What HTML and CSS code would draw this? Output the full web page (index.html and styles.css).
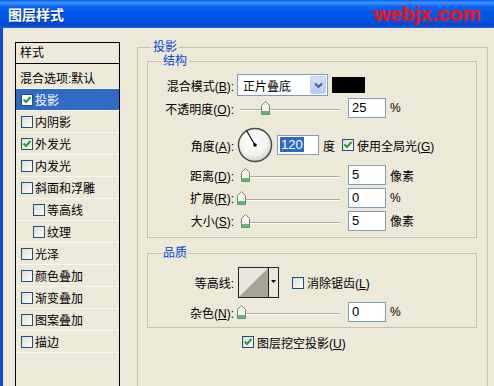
FILE: index.html
```html
<!DOCTYPE html>
<html lang="zh-CN">
<head>
  <meta charset="UTF-8">
  <title>图层样式</title>
  <link rel="stylesheet" href="styles.css">
</head>
<body>

<div class="titlebar">
  <span class="title">图层样式</span>
  <span class="brand">webjx.com</span>
</div>

<div class="window">
  <!-- left: styles list -->
  <div class="styles-list">
    <div class="list-head">样式</div>
    <ul class="list-items">
      <li class="item plain">混合选项:默认</li>
      <li class="item selected"><span class="cb"><svg width="10" height="10" viewBox="0 0 10 10"><path d="M1.5 4.5 L4 7 L8.5 2" fill="none" stroke="#21A121" stroke-width="2"/></svg></span>投影</li>
      <li class="item"><span class="cb"></span>内阴影</li>
      <li class="item"><span class="cb"><svg width="10" height="10" viewBox="0 0 10 10"><path d="M1.5 4.5 L4 7 L8.5 2" fill="none" stroke="#21A121" stroke-width="2"/></svg></span>外发光</li>
      <li class="item"><span class="cb"></span>内发光</li>
      <li class="item"><span class="cb"></span>斜面和浮雕</li>
      <li class="item sub"><span class="cb"></span>等高线</li>
      <li class="item sub"><span class="cb"></span>纹理</li>
      <li class="item"><span class="cb"></span>光泽</li>
      <li class="item"><span class="cb"></span>颜色叠加</li>
      <li class="item"><span class="cb"></span>渐变叠加</li>
      <li class="item"><span class="cb"></span>图案叠加</li>
      <li class="item"><span class="cb"></span>描边</li>
    </ul>
  </div>

  <!-- right: drop shadow settings -->
  <fieldset class="group main-group">
    <legend>投影</legend>

    <fieldset class="group sub-group">
      <legend>结构</legend>

      <div class="row row-blend">
        <span class="lbl">混合模式(<u>B</u>):</span>
        <div class="select">
          <span class="select-text">正片叠底</span>
          <span class="select-btn"><svg width="9" height="7" viewBox="0 0 9 7"><path d="M1 1.5 L4.5 5 L8 1.5" fill="none" stroke="#4D6185" stroke-width="2"/></svg></span>
        </div>
        <span class="swatch"></span>
      </div>

      <div class="row">
        <span class="lbl">不透明度(<u>O</u>):</span>
        <div class="slider"><span class="track"></span><svg class="thumb" style="left:24px" width="9" height="14" viewBox="0 0 9 14"><path d="M0.5 4.5 L4.5 0.5 L8.5 4.5 V13.5 H0.5 Z" fill="#F6F6F1" stroke="#7D8470"/><path d="M1 10 H8 V13 H1 Z" fill="#52C172"/></svg></div>
        <span class="num">25</span>
        <span class="unit">%</span>
      </div>

      <div class="row row-angle">
        <span class="lbl">角度(<u>A</u>):</span>
        <svg class="dial" width="36" height="36" viewBox="0 0 36 36">
          <defs>
            <radialGradient id="dialFill" cx="45%" cy="40%" r="60%">
              <stop offset="0%" stop-color="#FFFFFF"/>
              <stop offset="70%" stop-color="#F2F2EE"/>
              <stop offset="100%" stop-color="#CFCFCA"/>
            </radialGradient>
          </defs>
          <circle cx="18" cy="18" r="16.5" fill="url(#dialFill)" stroke="#4A4A4A" stroke-width="1.5"/>
          <line x1="18" y1="18" x2="9.5" y2="3.5" stroke="#111" stroke-width="1.2"/>
          <circle cx="18" cy="18" r="1.8" fill="#000"/>
        </svg>
        <span class="num wide"><span class="sel">120</span></span>
        <span class="unit">度</span>
        <span class="cb global"><svg width="10" height="10" viewBox="0 0 10 10"><path d="M1.5 4.5 L4 7 L8.5 2" fill="none" stroke="#21A121" stroke-width="2"/></svg></span>
        <span class="cb-text">使用全局光(<u>G</u>)</span>
      </div>

      <div class="row">
        <span class="lbl">距离(<u>D</u>):</span>
        <div class="slider"><span class="track"></span><svg class="thumb" style="left:4px" width="9" height="14" viewBox="0 0 9 14"><path d="M0.5 4.5 L4.5 0.5 L8.5 4.5 V13.5 H0.5 Z" fill="#F6F6F1" stroke="#7D8470"/><path d="M1 10 H8 V13 H1 Z" fill="#52C172"/></svg></div>
        <span class="num">5</span>
        <span class="unit">像素</span>
      </div>

      <div class="row row-tall">
        <span class="lbl">扩展(<u>R</u>):</span>
        <div class="slider"><span class="track"></span><svg class="thumb" style="left:0px" width="9" height="14" viewBox="0 0 9 14"><path d="M0.5 4.5 L4.5 0.5 L8.5 4.5 V13.5 H0.5 Z" fill="#F6F6F1" stroke="#7D8470"/><path d="M1 10 H8 V13 H1 Z" fill="#52C172"/></svg></div>
        <span class="num">0</span>
        <span class="unit">%</span>
      </div>

      <div class="row row-tall">
        <span class="lbl">大小(<u>S</u>):</span>
        <div class="slider"><span class="track"></span><svg class="thumb" style="left:4px" width="9" height="14" viewBox="0 0 9 14"><path d="M0.5 4.5 L4.5 0.5 L8.5 4.5 V13.5 H0.5 Z" fill="#F6F6F1" stroke="#7D8470"/><path d="M1 10 H8 V13 H1 Z" fill="#52C172"/></svg></div>
        <span class="num">5</span>
        <span class="unit">像素</span>
      </div>
    </fieldset>

    <fieldset class="group sub-group quality">
      <legend>品质</legend>

      <div class="row row-contour">
        <span class="lbl">等高线:</span>
        <svg class="contour" width="41" height="31" viewBox="0 0 41 31">
          <rect x="0.5" y="0.5" width="40" height="30" fill="#EAE8DE" stroke="#222"/>
          <path d="M1 30 L30 1 V30 Z" fill="#A8A597"/>
          <line x1="30.5" y1="1" x2="30.5" y2="30" stroke="#222"/>
          <path d="M33 13 H38 L35.5 16 Z" fill="#000"/>
        </svg>
        <span class="cb aa"></span>
        <span class="cb-text">消除锯齿(<u>L</u>)</span>
      </div>

      <div class="row">
        <span class="lbl">杂色(<u>N</u>):</span>
        <div class="slider"><span class="track"></span><svg class="thumb" style="left:0px" width="9" height="14" viewBox="0 0 9 14"><path d="M0.5 4.5 L4.5 0.5 L8.5 4.5 V13.5 H0.5 Z" fill="#F6F6F1" stroke="#7D8470"/><path d="M1 10 H8 V13 H1 Z" fill="#52C172"/></svg></div>
        <span class="num">0</span>
        <span class="unit">%</span>
      </div>
    </fieldset>

    <div class="row knockout">
      <span class="cb"><svg width="10" height="10" viewBox="0 0 10 10"><path d="M1.5 4.5 L4 7 L8.5 2" fill="none" stroke="#21A121" stroke-width="2"/></svg></span>
      <span class="cb-text">图层挖空投影(<u>U</u>)</span>
    </div>
  </fieldset>
</div>

</body>
</html>
```

FILE: styles.css
```css
body {
  margin: 0;
  height: 386px;
  overflow: hidden;
  background: #ECE9D8;
  color: #000;
  font-family: "Liberation Sans", "Noto Sans CJK SC", sans-serif;
  font-size: 12px;
}

/* XP style title bar */
.titlebar {
  height: 28px;
  display: flex;
  align-items: center;
  justify-content: space-between;
  padding: 0 13px 0 8px;
  background: linear-gradient(to bottom, #0A5CEE 0%, #3D95FF 10%, #0E66F2 22%, #0057E6 45%, #0053E0 75%, #0047CB 92%, #2B6BE0 100%);
}

.title {
  color: #fff;
  font-family: "Noto Sans CJK SC", sans-serif;
  font-weight: bold;
  font-size: 14px;
  text-shadow: 1px 1px 0 #0A2F96;
}

.brand {
  color: #E4141F;
  font-family: "Liberation Sans", sans-serif;
  font-weight: bold;
  font-size: 21px;
  text-shadow: 0 0 2px rgba(255, 60, 60, 0.6);
}

.window {
  display: flex;
  align-items: flex-start;
  height: 358px;
  overflow: hidden;
  border-left: 3px solid #0B4CD6;
}

/* left list */
.styles-list {
  flex: none;
  width: 103px;
  height: 344px;
  margin: 14px 0 0 12px;
  border: 1px solid #000;
  border-bottom: none;
}

.list-head {
  height: 20px;
  line-height: 20px;
  padding-left: 4px;
  border-bottom: 1px solid #000;
}

.list-items {
  list-style: none;
  margin: 3px 0 0;
  padding: 0;
}

.item {
  height: 21px;
  display: flex;
  align-items: center;
  gap: 2px;
  padding-left: 5px;
  border-bottom: 1px solid #F9F8F3;
  white-space: nowrap;
}

.item.plain {
  padding-left: 4px;
}

.item.sub {
  padding-left: 17px;
}

.item.selected {
  background: #316AC5;
  color: #fff;
}

.item.selected .cb {
  background: #fff;
}

/* checkbox */
.cb {
  flex: none;
  box-sizing: border-box;
  width: 12px;
  height: 12px;
  border: 1px solid #1C5180;
  background: linear-gradient(135deg, #DCDCD6 0%, #F4F4F0 70%, #FFFFFF 100%);
  display: flex;
  align-items: center;
  justify-content: center;
}

.cb svg {
  display: block;
}

.cb-text {
  margin-left: 3px;
  white-space: nowrap;
}

/* group boxes */
.group {
  margin: 0;
  border: 1px solid #C4C1B0;
  min-width: 0;
}

.group legend {
  padding: 0 2px;
  font-size: 12px;
  line-height: 14px;
  color: #0046D5;
}

.main-group {
  flex: none;
  box-sizing: border-box;
  width: 351px;
  height: 346px;
  margin: 12px 0 0 17px;
  padding: 0 10px 0 9px;
  border-bottom: none;
}

.main-group > legend {
  margin-left: 4px;
}

.sub-group {
  padding: 0 0 5px;
}

.sub-group > legend {
  margin-left: 13px;
}

.quality {
  margin-top: 8px;
  padding-bottom: 4px;
}

/* rows */
.row {
  display: flex;
  align-items: center;
  height: 22px;
  white-space: nowrap;
}

.lbl {
  flex: none;
  width: 86px;
  margin-right: 3px;
  text-align: right;
}

.row-blend {
  height: 24px;
  margin-top: 5px;
}

.row-angle {
  height: 38px;
  margin-top: 7px;
}

.row-tall {
  height: 23px;
}

.select {
  flex: none;
  box-sizing: border-box;
  width: 91px;
  height: 22px;
  display: flex;
  align-items: center;
  border: 1px solid #7F9DB9;
  background: #fff;
}

.select-text {
  flex: 1;
  padding-left: 5px;
}

.select-btn {
  width: 16px;
  height: 18px;
  margin-right: 1px;
  display: flex;
  align-items: center;
  justify-content: center;
  border-radius: 2px;
  background: linear-gradient(to bottom, #D2E0FD, #B5C9F7);
  border: 1px solid #C0D0F4;
  box-sizing: border-box;
}

.swatch {
  flex: none;
  width: 33px;
  height: 16px;
  margin-left: 4px;
  background: #000;
}

.slider {
  flex: none;
  position: relative;
  width: 106px;
  height: 16px;
}

.track {
  position: absolute;
  left: 3px;
  right: 3px;
  top: 9px;
  height: 0;
  border-top: 1px solid #A9A89C;
  border-bottom: 1px solid #FFFFFF;
}

.thumb {
  position: absolute;
  top: 1px;
}

.num {
  flex: none;
  box-sizing: border-box;
  width: 38px;
  height: 20px;
  margin-left: 5px;
  padding-left: 3px;
  border: 1px solid #7F9DB9;
  background: #fff;
  font-size: 13px;
  line-height: 18px;
}

.num.wide {
  width: 42px;
  margin-left: 4px;
  padding-left: 2px;
}

.sel {
  background: #316AC5;
  color: #fff;
  padding: 0 1px;
}

.unit {
  margin-left: 4px;
}

.dial {
  flex: none;
}

.global {
  margin-left: 7px;
}

.row-contour {
  height: 31px;
  margin-top: 7px;
}

.contour {
  flex: none;
  margin-left: 1px;
}

.aa {
  margin-left: 13px;
}

.quality .row + .row {
  margin-top: 3px;
}

.knockout {
  height: 18px;
  margin-top: 5px;
  padding-left: 95px;
}
```
